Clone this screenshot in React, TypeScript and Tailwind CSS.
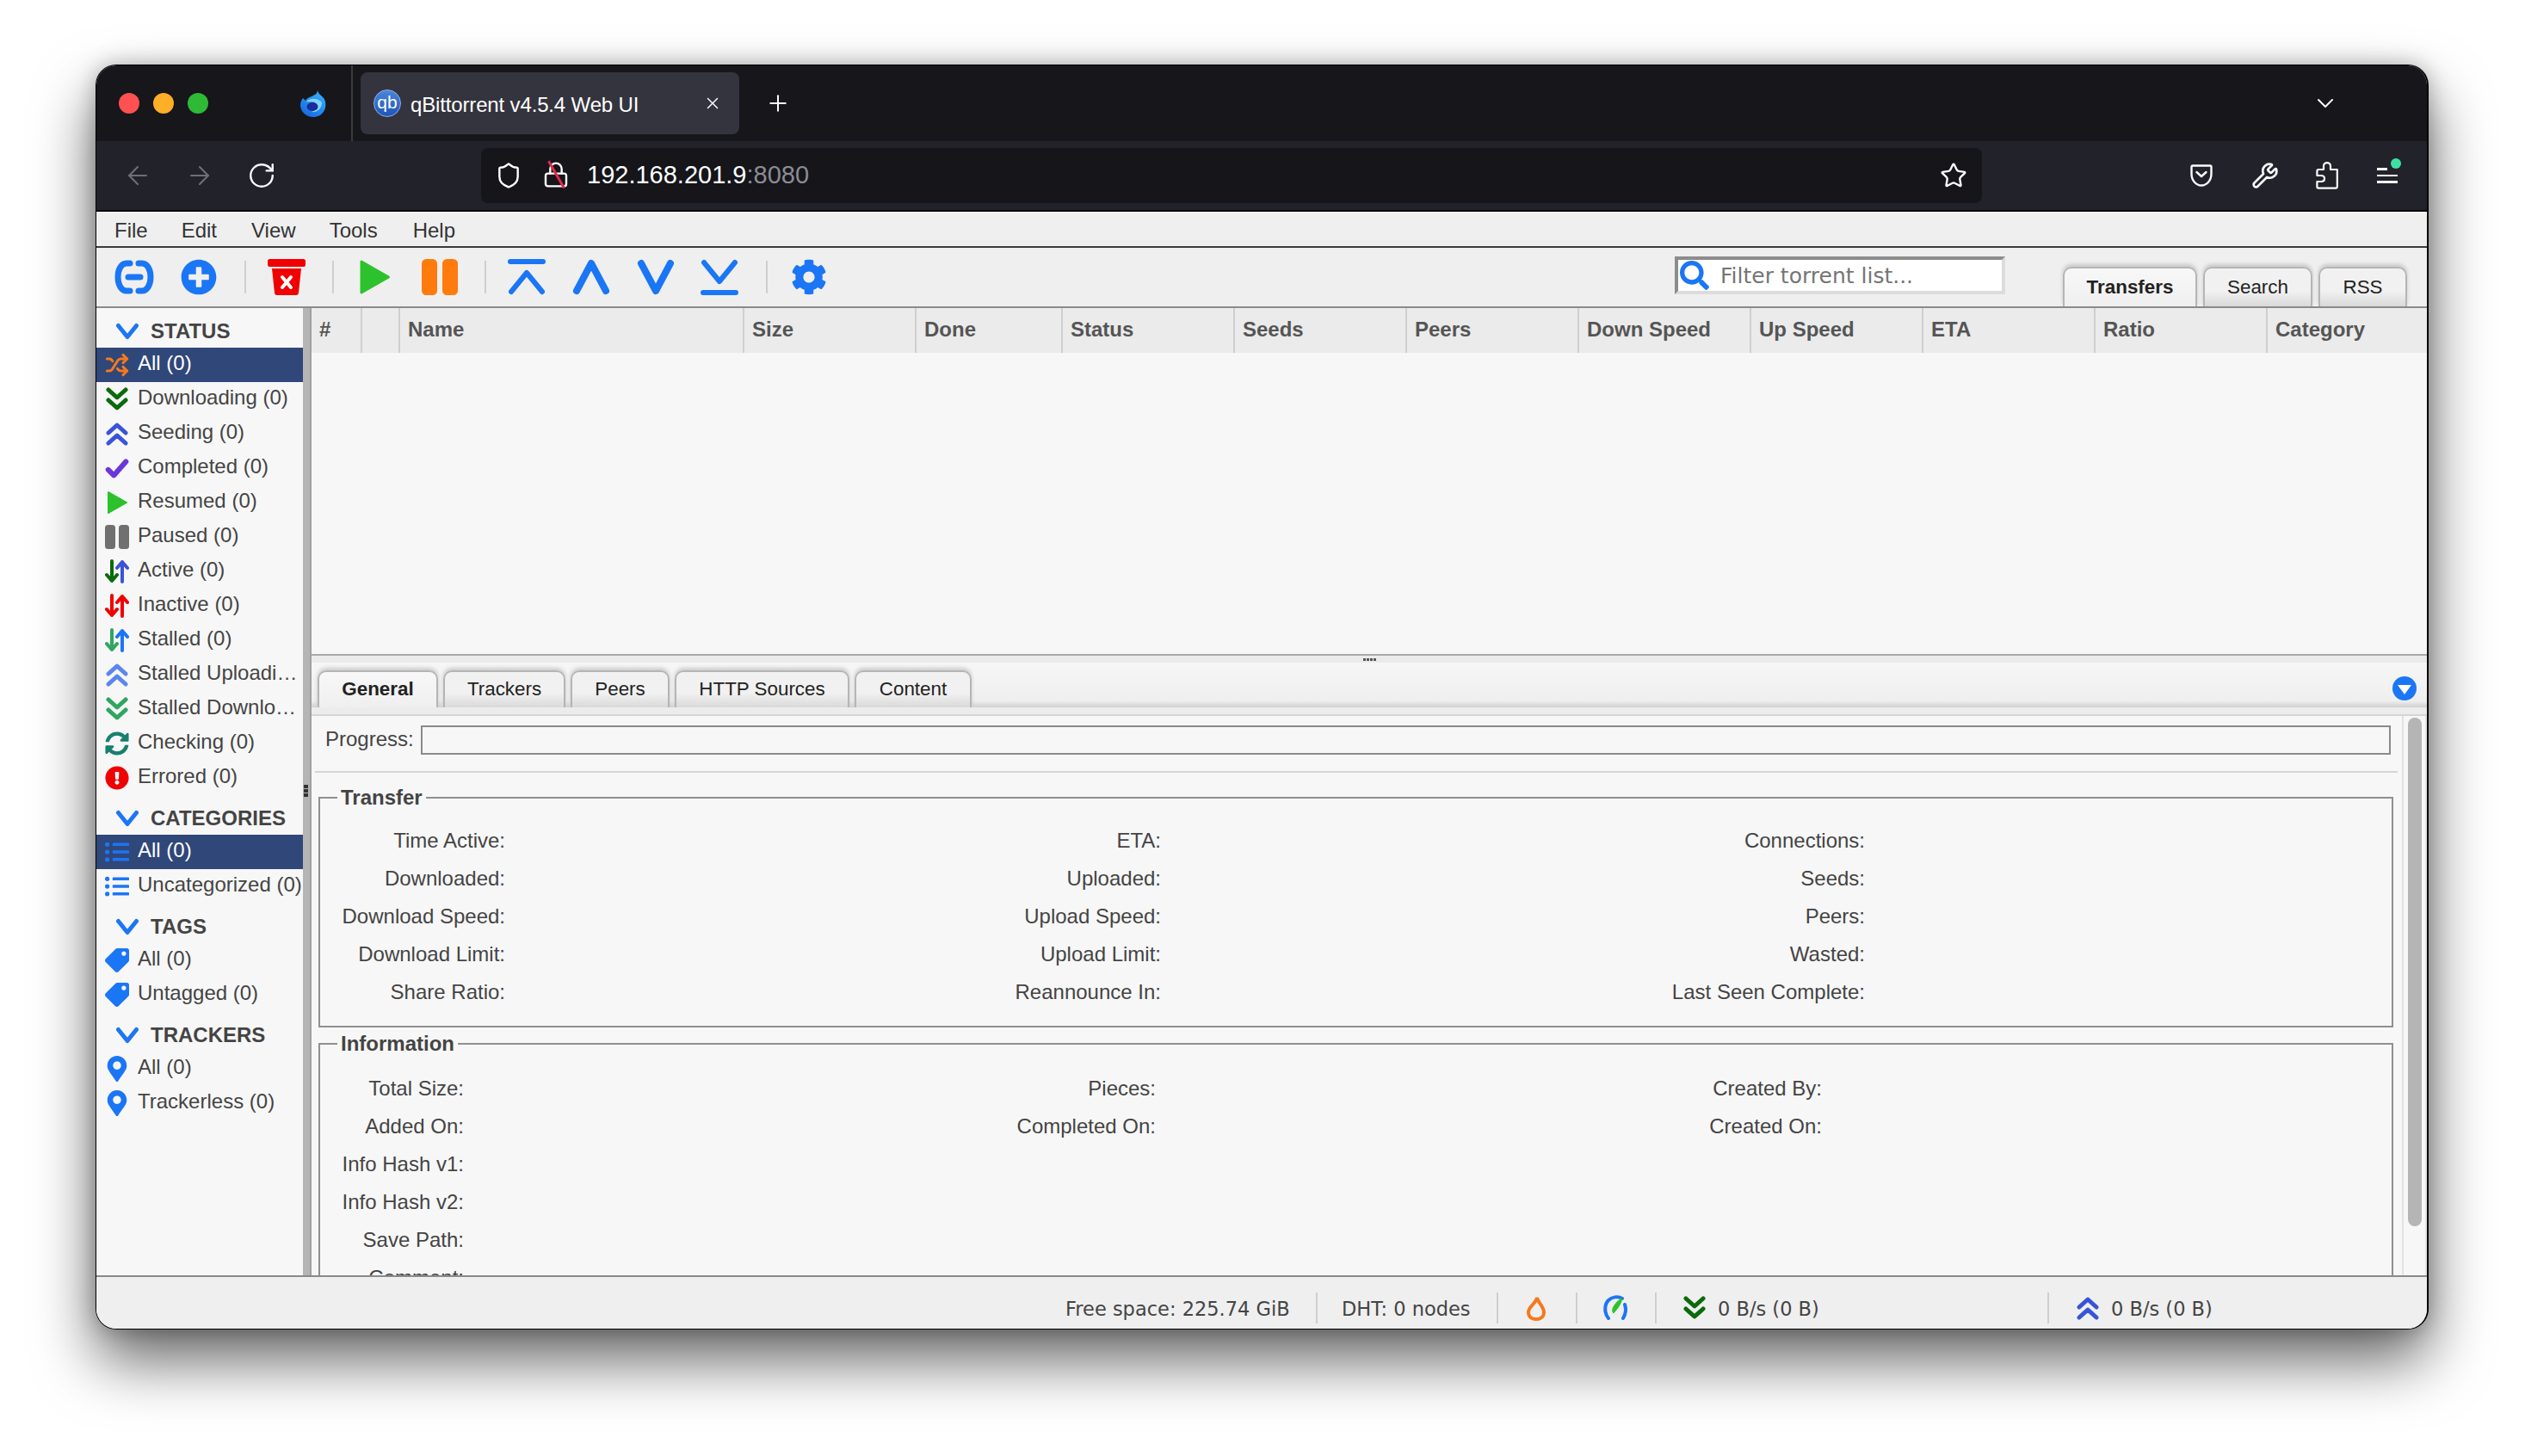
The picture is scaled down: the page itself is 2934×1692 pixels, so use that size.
import { ArrowLeft, ArrowRight, ChevronDown, Lock, Plus, RotateCw, Shield, Shuffle, Star, Wrench, X } from "lucide-react";
import { FaCog, FaExclamationCircle, FaListUl, FaMapMarkerAlt, FaPlusCircle, FaSearch, FaSyncAlt, FaTag } from "react-icons/fa";
import type { ReactNode } from "react";

const BLUE = "#1b76f5";

function Double({ up, color, size = 28 }: { up?: boolean; color: string; size?: number }) {
  const d = up ? "M4 13 L14 4 L24 13 M4 25 L14 16 L24 25" : "M4 3 L14 12 L24 3 M4 15 L14 24 L24 15";
  return (
    <svg width={size} height={size} viewBox="0 0 28 28" fill="none" stroke={color} strokeWidth="5" strokeLinecap="round" strokeLinejoin="round">
      <path d={d} />
    </svg>
  );
}

function Arrows({ down, up }: { down: string; up: string }) {
  return (
    <svg width="28" height="28" viewBox="0 0 28 28" fill="none" strokeWidth="4" strokeLinecap="round" strokeLinejoin="round">
      <path d="M8 2 V25 M2 18 L8 25 L14 18" stroke={down} />
      <path d="M20 26 V3 M14 10 L20 3 L26 10" stroke={up} />
    </svg>
  );
}

function Check() {
  return (
    <svg width="30" height="28" viewBox="0 0 30 28" fill="none" stroke="#6a35d9" strokeWidth="6.5" strokeLinecap="round" strokeLinejoin="round">
      <path d="M4 16 L11 23 L26 6" />
    </svg>
  );
}

function Play({ size = 28 }: { size?: number }) {
  return (
    <svg width={size} height={size} viewBox="0 0 28 28" fill="#2dc22d" stroke="#2dc22d" strokeWidth="2" strokeLinejoin="round">
      <path d="M4 2 L25 14 L4 26 Z" />
    </svg>
  );
}

function Pause({ color, size = 28 }: { color: string; size?: number }) {
  return (
    <svg width={size} height={size} viewBox="0 0 28 28" fill={color}>
      <rect x="0" y="0" width="12" height="28" rx="3.5" />
      <rect x="16" y="0" width="12" height="28" rx="3.5" />
    </svg>
  );
}

function Chevron({ dir, color = BLUE, w = 28, h = 20, sw = 5 }: { dir: "up" | "down"; color?: string; w?: number; h?: number; sw?: number }) {
  const d = dir === "down" ? `M${sw / 2 + 1} ${sw / 2 + 1} L${w / 2} ${h - sw / 2 - 1} L${w - sw / 2 - 1} ${sw / 2 + 1}` : `M${sw / 2 + 1} ${h - sw / 2 - 1} L${w / 2} ${sw / 2 + 1} L${w - sw / 2 - 1} ${h - sw / 2 - 1}`;
  return (
    <svg width={w} height={h} viewBox={`0 0 ${w} ${h}`} fill="none" stroke={color} strokeWidth={sw} strokeLinecap="round" strokeLinejoin="round">
      <path d={d} />
    </svg>
  );
}

function Tag() {
  return <FaTag size={28} color={BLUE} className="-scale-x-100" />;
}

function Marker() {
  return <FaMapMarkerAlt size={30} color={BLUE} />;
}

function Section({ title, children }: { title: string; children: ReactNode }) {
  return (
    <div>
      <div className="flex h-[46px] items-center pl-[22px] pt-[8px]">
        <Chevron dir="down" />
        <span className="ml-[13px] text-[24px] font-bold text-[#444]">{title}</span>
      </div>
      {children}
    </div>
  );
}

function Row({ icon, label, selected }: { icon: ReactNode; label: string; selected?: boolean }) {
  return (
    <div className={selected ? "flex h-[40px] items-center bg-[#30477a] pl-[10px] text-white" : "flex h-[40px] items-center pl-[10px] text-[#444]"}>
      <span className="flex w-[28px] shrink-0 items-center justify-center">{icon}</span>
      <span className="ml-[10px] min-w-0 flex-1 truncate pb-[5px]">{label}</span>
    </div>
  );
}

const columns = [
  { label: "#", w: "w-[59px]" },
  { label: "", w: "w-[44px]" },
  { label: "Name", w: "w-[400px]" },
  { label: "Size", w: "w-[200px]" },
  { label: "Done", w: "w-[170px]" },
  { label: "Status", w: "w-[200px]" },
  { label: "Seeds", w: "w-[200px]" },
  { label: "Peers", w: "w-[200px]" },
  { label: "Down Speed", w: "w-[200px]" },
  { label: "Up Speed", w: "w-[200px]" },
  { label: "ETA", w: "w-[200px]" },
  { label: "Ratio", w: "w-[200px]" },
  { label: "Category", w: "flex-1" },
];

const transferRows = [
  ["Time Active:", "ETA:", "Connections:"],
  ["Downloaded:", "Uploaded:", "Seeds:"],
  ["Download Speed:", "Upload Speed:", "Peers:"],
  ["Download Limit:", "Upload Limit:", "Wasted:"],
  ["Share Ratio:", "Reannounce In:", "Last Seen Complete:"],
];

const infoRows = [
  ["Total Size:", "Pieces:", "Created By:"],
  ["Added On:", "Completed On:", "Created On:"],
  ["Info Hash v1:", "", ""],
  ["Info Hash v2:", "", ""],
  ["Save Path:", "", ""],
  ["Comment:", "", ""],
];

function Firefox() {
  return (
    <svg width="30" height="32" viewBox="0 0 30 32">
      <defs>
        <linearGradient id="ffb" x1="0.8" y1="0" x2="0.2" y2="1">
          <stop offset="0" stopColor="#35b4ff" />
          <stop offset="1" stopColor="#1668dc" />
        </linearGradient>
      </defs>
      <path d="M20 0 C20 5 24 6 27 10 C30 14 30 20 28 24 C25 30 20 32 15 32 C7 32 0 26 0 18 C0 15 1 13 3 10 C4 11 5 12 6 13 C8 9 12 9 15 7 C18 6 20 4 20 0 Z" fill="url(#ffb)" />
      <path d="M7 14 C12 9 21 10 25 15 C25 22 20 27 13 26 C18 24 21 21 19 17 C16 13 11 15 7 14 Z" fill="#7fd4ff" />
      <ellipse cx="14" cy="20" rx="6.5" ry="5" fill="#1d2a9a" />
    </svg>
  );
}

function Pocket() {
  return (
    <svg width="28" height="28" viewBox="0 0 28 28" fill="none" stroke="#fbfbfe" strokeWidth="2.4" strokeLinecap="round" strokeLinejoin="round">
      <path d="M4 2.5 H24 A1.5 1.5 0 0 1 25.5 4 V12 C25.5 20 20 25.5 14 25.5 C8 25.5 2.5 20 2.5 12 V4 A1.5 1.5 0 0 1 4 2.5 Z" />
      <path d="M8.5 10 L14 15 L19.5 10" />
    </svg>
  );
}

function PuzzlePiece() {
  return (
    <svg width="26" height="32" viewBox="0 0 26 32" fill="none" stroke="#fbfbfe" strokeWidth="2.2" strokeLinejoin="round">
      <path d="M3 9 H9 V5 C9 2.5 11 1.2 13 1.2 C15 1.2 17 2.5 17 5 V9 H24.8 V29 A1.6 1.6 0 0 1 23.2 30.6 H3 A1.6 1.6 0 0 1 1.4 29 V23 H6 C8.5 23 10 21.5 10 19.5 C10 17.5 8.5 16 6 16 H1.4 V10.6 A1.6 1.6 0 0 1 3 9 Z" />
    </svg>
  );
}

function Menu() {
  return (
    <div className="flex h-[40px] items-center bg-[#efefef] pt-[3px] text-[#333]">
      <span className="ml-[21px]">File</span>
      <span className="ml-[39px]">Edit</span>
      <span className="ml-[40px]">View</span>
      <span className="ml-[39px]">Tools</span>
      <span className="ml-[41px]">Help</span>
    </div>
  );
}

function Sep({ className }: { className: string }) {
  return <span className={`h-[38px] w-[2px] shrink-0 bg-[#cfcfcf] ${className}`} />;
}

function TabButton({ label, active, className }: { label: string; active?: boolean; className: string }) {
  return (
    <div
      className={`flex items-center justify-center rounded-t-[10px] border-x-2 border-t-2 border-[#b5b5b5] pb-[1px] text-[22.4px] text-[#222] shadow-[0_-3px_4px_rgba(0,0,0,0.16)] ${
        active ? "bg-[linear-gradient(#f8f8f8,#efefef)] font-bold" : "bg-[linear-gradient(#f1f1f1_60%,#d9d9d9)]"
      } ${className}`}
    >
      {label}
    </div>
  );
}

function Fields({ title, rows, grid, className }: { title: string; rows: string[][]; grid: string; className: string }) {
  return (
    <fieldset className={`border-2 border-[#8f8f8f] ${className}`}>
      <legend className="ml-[20px] px-[4px] text-[24px] font-bold leading-[26px] text-[#444]">{title}</legend>
      <div className={`grid ${grid} auto-rows-[44px] items-center text-right`}>
        {rows.flat().map((text, i) => (
          <span key={i}>{text}</span>
        ))}
      </div>
    </fieldset>
  );
}

export default function App() {
  return (
    <div className="h-[1692px] w-[2934px] overflow-hidden bg-white pl-[111px] pt-[75px] font-['Liberation_Sans',Arial,sans-serif] text-[24px]">
      <div className="flex h-[1470px] w-[2711px] flex-col overflow-hidden rounded-[24px] border-y border-l border-r-2 border-black bg-[#efefef] shadow-[0_36px_70px_rgba(0,0,0,0.6),0_0_24px_rgba(0,0,0,0.25)]">
        {/* browser tab strip */}
        <div className="flex h-[88px] shrink-0 items-center bg-[#16161b]">
          <span className="ml-[26px] h-[24px] w-[24px] rounded-full bg-[#ff5151]" />
          <span className="ml-[16px] h-[24px] w-[24px] rounded-full bg-[#ffae27]" />
          <span className="ml-[16px] h-[24px] w-[24px] rounded-full bg-[#2fba35]" />
          <span className="ml-[107px]">
            <Firefox />
          </span>
          <span className="ml-[29px] h-[88px] w-[2px] bg-[#3a3a42]" />
          <div className="ml-[9px] flex h-[72px] w-[440px] items-center rounded-[8px] bg-[#34343e] text-white">
            <span className="ml-[15px] flex h-[32px] w-[32px] items-center justify-center rounded-full border border-[#8fb0e8] bg-[linear-gradient(#4a86d8,#1f55b8)] pb-[3px] text-[21px] text-white">qb</span>
            <span className="ml-[11px] flex-1 pt-[4px] text-[24px] tracking-[-0.15px]">qBittorrent v4.5.4 Web UI</span>
            <X size={22} strokeWidth={1.5} className="mr-[20px]" />
          </div>
          <Plus size={30} strokeWidth={1.6} color="#fbfbfe" className="ml-[30px]" />
          <ChevronDown size={32} strokeWidth={1.5} color="#fbfbfe" className="ml-auto mr-[102px]" />
        </div>
        {/* browser nav bar */}
        <div className="flex h-[80px] shrink-0 items-center bg-[#22222a]">
          <ArrowLeft size={34} strokeWidth={1.5} color="#6f6f76" className="ml-[31px]" />
          <ArrowRight size={34} strokeWidth={1.5} color="#6f6f76" className="ml-[38px]" />
          <RotateCw size={34} strokeWidth={1.7} color="#fbfbfe" className="ml-[38px]" />
          <div className="ml-[238px] flex h-[64px] w-[1744px] items-center rounded-[8px] bg-[#15151a] text-[29px] text-white">
            <Shield size={32} strokeWidth={1.8} className="ml-[16px]" />
            <span className="ml-[24px] flex w-[30px] flex-col items-center">
              <Lock size={32} strokeWidth={1.8} />
              <span className="mt-[-34px] h-[36px] w-[2.5px] -rotate-[30deg] bg-[#e22850]" />
            </span>
            <span className="ml-[21px]">
              192.168.201.9<span className="text-[#8c8c92]">:8080</span>
            </span>
            <Star size={32} strokeWidth={1.8} className="ml-auto mr-[17px]" />
          </div>
          <span className="ml-[241px]">
            <Pocket />
          </span>
          <Wrench size={32} strokeWidth={2} color="#fbfbfe" className="ml-[44px]" />
          <span className="ml-[43px]">
            <PuzzlePiece />
          </span>
          <div className="ml-[45px] flex w-[24px] flex-col gap-[5px]">
            <span className="h-[2.5px] w-[12px] bg-[#fbfbfe]" />
            <span className="h-[2.5px] w-[24px] bg-[#fbfbfe]" />
            <span className="h-[2.5px] w-[24px] bg-[#fbfbfe]" />
          </div>
          <span className="-ml-[8px] mb-[28px] h-[12px] w-[12px] rounded-full bg-[#3fe1a0]" />
        </div>
        <div className="h-[2px] shrink-0 bg-black" />
        <Menu />
        <div className="h-[2px] shrink-0 bg-[#3a3a3a]" />
        {/* toolbar */}
        <div className="flex h-[68px] shrink-0 items-center bg-[#efefef]">
          <svg className="ml-[21px] shrink-0" width="46" height="42" viewBox="0 0 46 42" fill="none" stroke={BLUE} strokeWidth="7" strokeLinecap="round">
            <path d="M18 5 H14 C8 5 4 12 4 21 C4 30 8 37 14 37 H18" />
            <path d="M28 5 H32 C38 5 42 12 42 21 C42 30 38 37 32 37 H28" />
            <path d="M16 21 H30" />
          </svg>
          <FaPlusCircle size={42} color={BLUE} className="ml-[31px] shrink-0" />
          <Sep className="ml-[32px]" />
          <svg className="ml-[25px] shrink-0" width="44" height="42" viewBox="0 0 44 42">
            <rect x="0" y="0" width="44" height="9" rx="2.5" fill="#f00000" />
            <path d="M5 11 H39 L36 39 Q35.8 42 33 42 H11 Q8.2 42 8 39 Z" fill="#f00000" />
            <path d="M17 21 L27 33 M27 21 L17 33" stroke="#fff" strokeWidth="4" strokeLinecap="round" />
          </svg>
          <Sep className="ml-[31px]" />
          <span className="ml-[26px] shrink-0">
            <Play size={42} />
          </span>
          <span className="ml-[34px] shrink-0">
            <Pause color="#ff7b0d" size={42} />
          </span>
          <Sep className="ml-[31px]" />
          <svg className="ml-[25px] shrink-0" width="44" height="42" viewBox="0 0 44 42" fill="none" stroke={BLUE} strokeWidth="6" strokeLinecap="round" strokeLinejoin="round">
            <path d="M3 3 H41 M4 38 L22 16 L40 38" />
          </svg>
          <span className="ml-[31px] shrink-0">
            <Chevron dir="up" w={44} h={42} sw={8} />
          </span>
          <span className="ml-[31px] shrink-0">
            <Chevron dir="down" w={44} h={42} sw={8} />
          </span>
          <svg className="ml-[30px] shrink-0" width="44" height="42" viewBox="0 0 44 42" fill="none" stroke={BLUE} strokeWidth="6" strokeLinecap="round" strokeLinejoin="round">
            <path d="M4 4 L22 26 L40 4 M3 39 H41" />
          </svg>
          <Sep className="ml-[32px]" />
          <FaCog size={42} color={BLUE} className="ml-[27px] shrink-0" />
          <div className="mb-[4px] ml-[985px] flex h-[44px] w-[384px] shrink-0 items-center border-[4px] border-b-[#dcdcdc] border-l-[#8c8c8c] border-r-[#dcdcdc] border-t-[#8c8c8c] bg-white">
            <FaSearch size={34} color={BLUE} className="ml-[2px] shrink-0" />
            <span className="ml-[13px] whitespace-nowrap pt-[2px] font-['DejaVu_Sans',sans-serif] text-[25px] text-[#757575]">Filter torrent list...</span>
          </div>
          <div className="ml-[67px] flex h-[46px] gap-[7px] self-end">
            <TabButton label="Transfers" active className="w-[156px]" />
            <TabButton label="Search" className="w-[127px]" />
            <TabButton label="RSS" className="w-[103px]" />
          </div>
        </div>
        <div className="h-[2px] shrink-0 bg-[#8a8a8a]" />
        {/* main area */}
        <div className="flex h-[1124px] shrink-0">
          <aside className="w-[240px] shrink-0 bg-[#f7f7f7]">
            <Section title="STATUS">
              <Row selected icon={<Shuffle size={30} color="#f6791c" strokeWidth={2.6} />} label="All (0)" />
              <Row icon={<Double color="#0b6a0b" />} label="Downloading (0)" />
              <Row icon={<Double up color="#3a54d8" />} label="Seeding (0)" />
              <Row icon={<Check />} label="Completed (0)" />
              <Row icon={<Play />} label="Resumed (0)" />
              <Row icon={<Pause color="#707070" />} label="Paused (0)" />
              <Row icon={<Arrows down="#0b6a0b" up="#3a54d8" />} label="Active (0)" />
              <Row icon={<Arrows down="#f00000" up="#f00000" />} label="Inactive (0)" />
              <Row icon={<Arrows down="#2fa65f" up={BLUE} />} label="Stalled (0)" />
              <Row icon={<Double up color="#5b86f0" />} label="Stalled Uploading (0)" />
              <Row icon={<Double color="#2fa65f" />} label="Stalled Downloading (0)" />
              <Row icon={<FaSyncAlt size={28} color="#17806d" />} label="Checking (0)" />
              <Row icon={<FaExclamationCircle size={28} color="#f00000" />} label="Errored (0)" />
            </Section>
            <Section title="CATEGORIES">
              <Row selected icon={<FaListUl size={28} color={BLUE} />} label="All (0)" />
              <Row icon={<FaListUl size={28} color={BLUE} />} label="Uncategorized (0)" />
            </Section>
            <Section title="TAGS">
              <Row icon={<Tag />} label="All (0)" />
              <Row icon={<Tag />} label="Untagged (0)" />
            </Section>
            <Section title="TRACKERS">
              <Row icon={<Marker />} label="All (0)" />
              <Row icon={<Marker />} label="Trackerless (0)" />
            </Section>
          </aside>
          <div className="w-[8px] shrink-0 bg-[#b5b5b5] pl-[1px] pt-[554px]">
            <div className="flex w-[5px] flex-col gap-[1px]">
              <span className="h-[4px] bg-[#333]" />
              <span className="h-[4px] bg-[#333]" />
              <span className="h-[4px] bg-[#333]" />
            </div>
          </div>
          <div className="w-[2px] shrink-0 bg-[#a0a0a0]" />
          <div className="flex min-w-0 flex-1 flex-col">
            {/* torrent table */}
            <div className="h-[402px] shrink-0 bg-[#f7f7f7]">
              <div className="flex h-[52px] bg-[#ebebeb] text-[#555]">
                {columns.map((col) => (
                  <div key={col.label || "blank"} className={`${col.w} flex items-center border-r-2 border-[#cfcfcf] pb-[2px] pl-[9px] font-bold last:border-r-0`}>
                    {col.label}
                  </div>
                ))}
              </div>
            </div>
            <div className="h-[2px] shrink-0 bg-[#a9a9a9]" />
            <div className="flex h-[8px] shrink-0 items-center justify-center gap-[1px] bg-[#ebebeb]">
              <span className="h-[3px] w-[3px] bg-[#555]" />
              <span className="h-[3px] w-[3px] bg-[#555]" />
              <span className="h-[3px] w-[3px] bg-[#555]" />
              <span className="h-[3px] w-[3px] bg-[#555]" />
            </div>
            {/* property tabs */}
            <div className="flex h-[52px] shrink-0 items-end bg-[linear-gradient(#f6f6f6,#efefef_85%,#d0d0d0)] pl-[7px]">
              <div className="flex h-[43px] gap-[6px]">
                <TabButton label="General" active className="w-[140px]" />
                <TabButton label="Trackers" className="w-[142px]" />
                <TabButton label="Peers" className="w-[115px]" />
                <TabButton label="HTTP Sources" className="w-[203px]" />
                <TabButton label="Content" className="w-[136px]" />
              </div>
              <span className="mb-[8px] ml-auto mr-[12px] flex h-[28px] w-[28px] items-center justify-center rounded-full bg-[#1b76f5]">
                <span className="mt-[3px] h-0 w-0 border-x-[8px] border-t-[11px] border-x-transparent border-t-white" />
              </span>
            </div>
            <div className="h-[8px] shrink-0 bg-[#ececec]" />
            <div className="h-[2px] shrink-0 bg-[#d5d5d5]" />
            {/* general panel */}
            <div className="flex min-h-0 flex-1 bg-[#f7f7f7] text-[#444]">
              <div className="min-w-0 flex-1 overflow-hidden">
                <div className="ml-[16px] mt-[11px] flex h-[34px] items-center">
                  <span className="pb-[2px]">Progress:</span>
                  <div className="ml-[8px] h-[34px] w-[2289px] border-2 border-[#8a8a8a]" />
                </div>
                <div className="ml-[4px] mt-[19px] h-[2px] w-[2420px] bg-[#d5d5d5]" />
                <Fields title="Transfer" rows={transferRows} grid="mt-[15px] grid-cols-[215px_762px_818px]" className="ml-[8px] mt-[16px] h-[280px] w-[2411px]" />
                <Fields title="Information" rows={infoRows} grid="mt-[17px] grid-cols-[167px_804px_774px]" className="ml-[8px] mt-[6px] h-[400px] w-[2411px]" />
              </div>
              <div className="w-[29px] shrink-0 border-l-2 border-r-2 border-[#e2e2e2] pl-[5px] pt-[2px]">
                <div className="h-[591px] w-[16px] rounded-full bg-[#b5b5b5]" />
              </div>
            </div>
          </div>
        </div>
        <div className="h-[2px] shrink-0 bg-[#8a8a8a]" />
        {/* status bar */}
        <div className="flex h-[60px] shrink-0 items-center bg-[#efefef] pt-[12px] font-['DejaVu_Sans',sans-serif] text-[22.5px] text-[#444]">
          <span className="ml-[1126px] w-[260px] whitespace-nowrap pt-[3px]">Free space: 225.74 GiB</span>
          <span className="ml-[31px] h-[36px] w-[2px] bg-[#cfcfcf]" />
          <span className="ml-[28px] w-[151px] whitespace-nowrap pt-[3px]">DHT: 0 nodes</span>
          <span className="ml-[29px] h-[36px] w-[2px] bg-[#cfcfcf]" />
          <svg className="ml-[30px]" width="28" height="30" viewBox="0 0 28 30" fill="none" stroke="#f6791c" strokeWidth="4">
            <path d="M15 3 C16 9 23 13 23 20 C23 25 19 28 14 28 C9 28 5 25 5 20 C5 13 13 11 15 3 Z" />
          </svg>
          <span className="ml-[32px] h-[36px] w-[2px] bg-[#cfcfcf]" />
          <svg className="ml-[30px]" width="28" height="30" viewBox="0 0 28 30" fill="none">
            <path d="M6 27 C1 21 1 11 6 6 C10 2 17 1 22 4" stroke={BLUE} strokeWidth="4" strokeLinecap="round" />
            <path d="M25 11 C27 17 26 22 23 27" stroke={BLUE} strokeWidth="4" strokeLinecap="round" />
            <path d="M21 5 C20 11 16 15 12 20 C9 17 15 8 21 5 Z" fill="#2dc22d" stroke="#2dc22d" strokeWidth="2" />
          </svg>
          <span className="ml-[32px] h-[36px] w-[2px] bg-[#cfcfcf]" />
          <span className="ml-[30px]">
            <Double color="#0b6a0b" />
          </span>
          <span className="ml-[13px] w-[121px] whitespace-nowrap pt-[3px]">0 B/s (0 B)</span>
          <span className="ml-[262px] h-[36px] w-[2px] bg-[#cfcfcf]" />
          <span className="ml-[31px]">
            <Double up color="#3a54d8" />
          </span>
          <span className="ml-[13px] whitespace-nowrap pt-[3px]">0 B/s (0 B)</span>
        </div>
      </div>
    </div>
  );
}
